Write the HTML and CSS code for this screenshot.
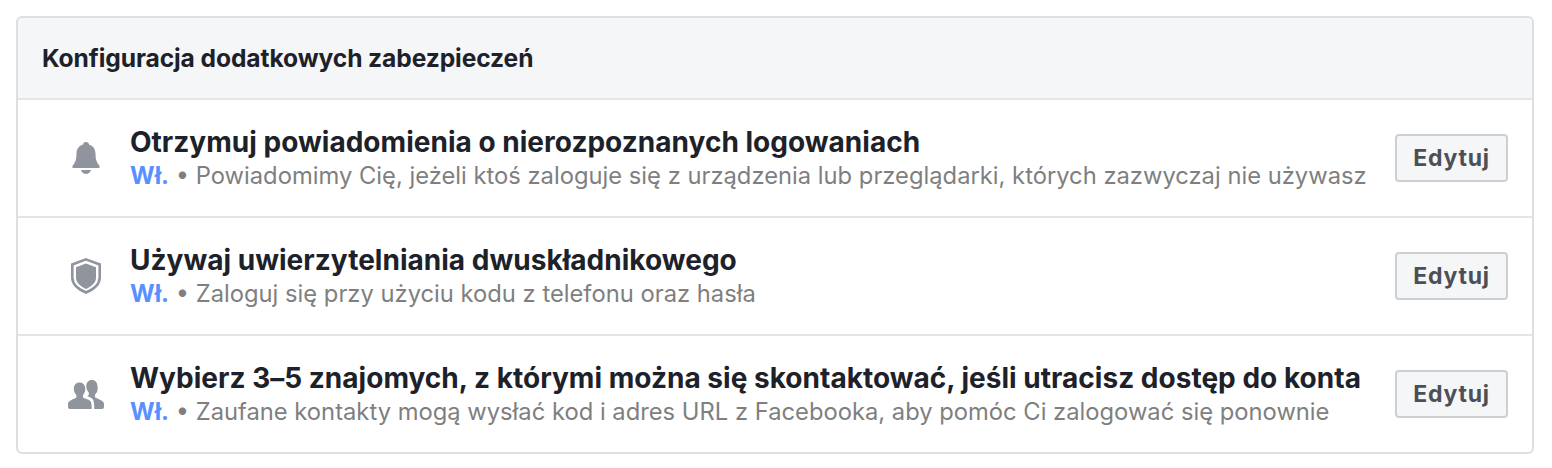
FILE: index.html
```html
<!DOCTYPE html>
<html lang="pl">
<head>
    <meta charset="UTF-8">
    <meta name="viewport" content="width=device-width, initial-scale=1.0">
    <title>Konfiguracja dodatkowych zabezpieczeń</title>
    <link rel="stylesheet" href="styles.css">
</head>
<body>
    <div class="card">
        <div class="card-header">Konfiguracja dodatkowych zabezpieczeń</div>

        <div class="row">
            <div class="row-icon">
                <svg class="icon-bell" width="28" height="32" viewBox="0 0 28 32"><path d="M14 0c-1.800 0-3 1.200-3.200 2.800C6.500 4 4.500 7.500 4.500 12c0 5-1 8.500-3.700 11.400C-.2 24.500.2 26 1.800 26h24.400c1.600 0 2-1.500 1-2.600C24.500 20.500 23.500 17 23.500 12c0-4.500-2-8-6.300-9.200C17 1.200 15.800 0 14 0z" fill="#90949c"/><path d="M9 28h10c-.8 2.500-2.800 4-5 4s-4.200-1.500-5-4z" fill="#90949c"/></svg>
            </div>
            <div class="row-text">
                <div class="row-title">Otrzymuj powiadomienia o nierozpoznanych logowaniach</div>
                <div class="row-desc"><span class="status">Wł.</span> <span class="dot">•</span> Powiadomimy Cię, jeżeli ktoś zaloguje się z urządzenia lub przeglądarki, których zazwyczaj nie używasz</div>
            </div>
            <button class="edit-btn">Edytuj</button>
        </div>

        <div class="row">
            <div class="row-icon">
                <svg width="30" height="36" viewBox="0 0 30 36"><path d="M15 1.400 28.700 6.500v13c0 6.500-5.700 11.700-13.700 15C7 31.200 1.300 26 1.300 19.500v-13z" fill="none" stroke="#90949c" stroke-width="2.600"/><path d="M15 5.500 25 9.300v10.500c0 4.800-4.300 8.500-10 11.200C9.300 28.300 5 24.600 5 19.800V9.300z" fill="#90949c"/></svg>
            </div>
            <div class="row-text">
                <div class="row-title">Używaj uwierzytelniania dwuskładnikowego</div>
                <div class="row-desc"><span class="status">Wł.</span> <span class="dot">•</span> Zaloguj się przy użyciu kodu z telefonu oraz hasła</div>
            </div>
            <button class="edit-btn">Edytuj</button>
        </div>

        <div class="row">
            <div class="row-icon">
                <svg class="icon-people" width="36" height="29" viewBox="0 0 36 29"><path d="M24 0c-3.600 0-5.700 2.600-5.700 6.200 0 2.700 1 4.800 2.500 6.200v2.400c-.4.500-.9.800-1.500 1.100 2.900 1.200 5 2.400 5.800 3.900.8 1.400 1.200 4.800 1.200 9.200H34c1.300 0 2-.7 2-2v-3c0-2.500-2.800-3.800-7.800-5.900-.7-.3-1.200-.7-1.200-1.300v-2c1.500-1.400 2.700-3.500 2.700-6.200C29.700 2.600 27.600 0 24 0z" fill="#90949c"/><path d="M11.500 2.500C8 2.500 5.800 5.200 5.800 8.800c0 2.700 1.100 4.800 2.600 6.200v2c0 .6-.5 1-1.200 1.300C2.800 20.200 0 21.500 0 24v3c0 1.300.7 2 2 2h21.700c0-3.600-.3-6.400-.9-7.500-.6-1-3.200-2.300-6.600-3.200-.7-.3-1.200-.7-1.200-1.300v-2c1.500-1.400 2.300-3.500 2.300-6.200 0-3.600-2.300-6.300-5.800-6.300z" fill="#90949c"/></svg>
            </div>
            <div class="row-text">
                <div class="row-title">Wybierz 3–5 znajomych, z którymi można się skontaktować, jeśli utracisz dostęp do konta</div>
                <div class="row-desc"><span class="status">Wł.</span> <span class="dot">•</span> Zaufane kontakty mogą wysłać kod i adres URL z Facebooka, aby pomóc Ci zalogować się ponownie</div>
            </div>
            <button class="edit-btn">Edytuj</button>
        </div>
    </div>
</body>
</html>
```

FILE: styles.css
```css
body {
    margin: 0;
    padding: 16px 18px 14px 16px;
    background-color: white;
    font-family: Inter, "Liberation Sans", sans-serif;
}
.card {
    border: 2px solid #dddfe2;
    border-radius: 6px;
    overflow: hidden;
}
.card-header {
    height: 80px;
    line-height: 80px;
    padding-left: 24px;
    background-color: #f5f6f7;
    color: #1d2129;
    font-size: 24.6px;
    font-weight: 700;
    letter-spacing: -0.1px;
}
.row {
    display: flex;
    align-items: center;
    height: 116px;
    border-top: 2px solid #e5e5e5;
}
.row-icon {
    box-sizing: border-box;
    width: 112px;
    flex-shrink: 0;
    display: flex;
    justify-content: center;
    padding-left: 24px;
}
.row-text {
    flex: 1;
    min-width: 0;
    padding-top: 1px;
    white-space: nowrap;
}
.row-title {
    color: #1d2129;
    font-size: 28px;
    font-weight: 700;
    line-height: 34px;
    letter-spacing: 0.02px;
}
.row-desc {
    margin-top: 1px;
    color: #7f7f7f;
    font-size: 23.75px;
    line-height: 32px;
}
.status {
    color: #5890ff;
    font-weight: 700;
}
.dot {
    color: #7f7f7f;
}
.edit-btn {
    width: 113px;
    height: 48px;
    margin-right: 24px;
    padding: 0;
    background-color: #f5f6f7;
    border: 2px solid #ccd0d5;
    border-radius: 4px;
    color: #4b4f56;
    font-family: inherit;
    font-size: 23px;
    font-weight: 700;
    letter-spacing: 0.8px;
}
```
